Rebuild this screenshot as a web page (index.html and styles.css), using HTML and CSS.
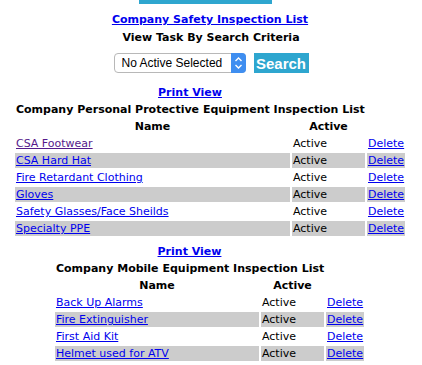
FILE: index.html
```html
<!DOCTYPE html>
<html>
<head>
<meta charset="utf-8">
<link rel="stylesheet" href="styles.css">
</head>
<body>
<div class="page">
  <div class="banner"></div>
  <a class="page-title" href="#">Company Safety Inspection List</a>
  <div class="subtitle">View Task By Search Criteria</div>
  <form class="search">
    <span class="select-wrap">
      <select class="select">
        <option>No Active Selected</option>
      </select>
      <svg class="stepper" width="15" height="20" viewBox="0 0 15 20">
        <path d="M0 0 H11 A4 4 0 0 1 15 4 V16 A4 4 0 0 1 11 20 H0 Z" fill="#3f8ef0"/>
        <path d="M4.5 8 L7.5 5 L10.5 8" fill="none" stroke="#fff" stroke-width="1.4"/>
        <path d="M4.5 12 L7.5 15 L10.5 12" fill="none" stroke="#fff" stroke-width="1.4"/>
      </svg>
    </span>
    <button class="search-btn" type="button">Search</button>
  </form>

  <table class="list list-ppe">
    <colgroup><col class="c-name"><col class="c-active"><col class="c-del"></colgroup>
    <tr><td colspan="2" class="center"><a class="print" href="#">Print View</a></td><td></td></tr>
    <tr><td colspan="2" class="center heading">Company Personal Protective Equipment Inspection List</td><td></td></tr>
    <tr><th>Name</th><th>Active</th><th></th></tr>
    <tr><td><a class="visited" href="#">CSA Footwear</a></td><td>Active</td><td><a href="#">Delete</a></td></tr>
    <tr class="alt"><td><a href="#">CSA Hard Hat</a></td><td>Active</td><td><a href="#">Delete</a></td></tr>
    <tr><td><a href="#">Fire Retardant Clothing</a></td><td>Active</td><td><a href="#">Delete</a></td></tr>
    <tr class="alt"><td><a href="#">Gloves</a></td><td>Active</td><td><a href="#">Delete</a></td></tr>
    <tr><td><a href="#">Safety Glasses/Face Sheilds</a></td><td>Active</td><td><a href="#">Delete</a></td></tr>
    <tr class="alt"><td><a href="#">Specialty PPE</a></td><td>Active</td><td><a href="#">Delete</a></td></tr>
  </table>

  <table class="list list-mobile">
    <colgroup><col class="c-name"><col class="c-active"><col class="c-del"></colgroup>
    <tr><td colspan="2" class="center"><a class="print" href="#">Print View</a></td><td></td></tr>
    <tr><td colspan="2" class="center heading">Company Mobile Equipment Inspection List</td><td></td></tr>
    <tr><th>Name</th><th>Active</th><th></th></tr>
    <tr><td><a href="#">Back Up Alarms</a></td><td>Active</td><td><a href="#">Delete</a></td></tr>
    <tr class="alt"><td><a href="#">Fire Extinguisher</a></td><td>Active</td><td><a href="#">Delete</a></td></tr>
    <tr><td><a href="#">First Aid Kit</a></td><td>Active</td><td><a href="#">Delete</a></td></tr>
    <tr class="alt"><td><a href="#">Helmet used for ATV</a></td><td>Active</td><td><a href="#">Delete</a></td></tr>
  </table>
</div>
</body>
</html>
```

FILE: styles.css
```css
html, body {
  margin: 0;
  padding: 0;
  background: #fff;
}
body {
  font-family: "DejaVu Sans", Verdana, sans-serif;
  font-size: 11px;
  color: #000;
}
a {
  color: #0000ee;
  text-decoration: underline;
}
a.visited {
  color: #551a8b;
}
.page {
  display: flex;
  flex-direction: column;
  align-items: center;
}
.banner {
  width: 133px;
  height: 4px;
  background: #2ea6cf;
  margin-left: -11px;
}
.page-title {
  font-weight: bold;
  margin-top: 9px;
  margin-left: -2px;
  line-height: 13px;
}
.subtitle {
  font-weight: bold;
  margin-top: 5px;
  line-height: 13px;
}
.search {
  display: flex;
  gap: 8px;
  margin: 9px 0 0 0;
}
.select-wrap {
  position: relative;
  display: block;
  width: 132px;
  height: 20px;
}
.select {
  appearance: none;
  -webkit-appearance: none;
  box-sizing: border-box;
  width: 132px;
  height: 20px;
  margin: 0;
  border: 1px solid #b8b8b8;
  border-radius: 4px;
  background: #fff;
  font-family: "Liberation Sans", Arial, sans-serif;
  font-size: 12px;
  color: #000;
  padding: 0 0 0 7px;
}
.stepper {
  position: absolute;
  right: 0;
  top: 0;
}
.search-btn {
  box-sizing: border-box;
  width: 55px;
  height: 20px;
  margin: 0;
  padding: 0;
  border: none;
  border-radius: 0;
  background: #2ea6cf;
  color: #fff;
  font-family: "Liberation Sans", Arial, sans-serif;
  font-weight: bold;
  font-size: 15px;
}
.list {
  border-collapse: separate;
  border-spacing: 2px;
  table-layout: fixed;
}
.list-ppe {
  margin-top: 10px;
  margin-left: -2px;
  width: 394px;
}
.list-ppe .c-name { width: 275px; }
.list-ppe .c-active { width: 73px; }
.list-mobile {
  margin-top: 4px;
  margin-left: -3px;
  width: 313px;
}
.list-mobile .c-name { width: 204px; }
.list-mobile .c-active { width: 63px; }
.c-del { width: 38px; }
.list td, .list th {
  padding: 1px;
  line-height: 13px;
  height: 13px;
  white-space: nowrap;
  text-align: left;
}
.list th {
  text-align: center;
  font-weight: bold;
}
.list td.center {
  text-align: center;
}
.heading {
  font-weight: bold;
}
.print {
  font-weight: bold;
}
.list tr.alt td {
  background: #cccccc;
}
```
